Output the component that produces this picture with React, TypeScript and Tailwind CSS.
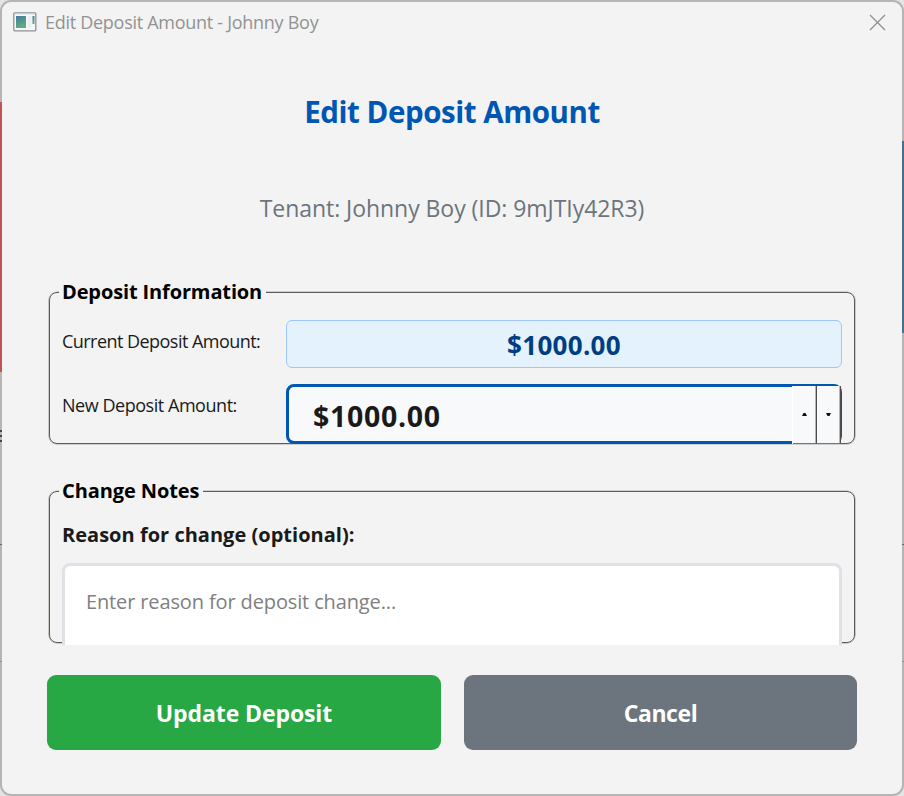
import type { ReactNode } from "react";

function Group({ title, tracking, className, children }: { title: string; tracking: string; className: string; children: ReactNode }) {
  return (
    <fieldset className={`w-[806px] rounded-[8px] border border-[#5c5c5c] shadow-[0_0_0_0.6px_#aaaaaa] ${className}`}>
      <legend className={`ml-[9px] h-[26px] whitespace-nowrap bg-[#f3f3f3] pr-1 pl-[3px] text-[20px] leading-[26px] font-bold text-black ${tracking}`}>
        {title}
      </legend>
      {children}
    </fieldset>
  );
}

function WindowIcon() {
  return (
    <svg width="24" height="20" viewBox="0 0 24 20" className="shrink-0">
      <defs>
        <linearGradient id="pane" x1="0" y1="0" x2="0.4" y2="1">
          <stop offset="0" stopColor="#4478a6" />
          <stop offset="1" stopColor="#5ab078" />
        </linearGradient>
      </defs>
      <rect x="0.8" y="0.8" width="22" height="18" rx="1" fill="#f7f8f8" stroke="#8b9198" strokeWidth="1.3" />
      <path d="M2 2.2h19.5" stroke="#dfe3e6" />
      <rect x="3" y="4" width="10" height="12" fill="url(#pane)" />
      <rect x="14.5" y="4" width="4" height="12" fill="#eceeef" />
      <rect x="19.5" y="4" width="2" height="8" fill="url(#pane)" />
    </svg>
  );
}

export default function App() {
  return (
    <div className="relative h-[796px] w-[904px] overflow-hidden bg-[#e4e4e4] font-['Open_Sans','Noto_Sans',sans-serif]">
      <div className="flex h-[796px] w-[904px] flex-col overflow-hidden rounded-[11px] border-2 border-[#b5b5b5] bg-[#f3f3f3]">
        <header className="flex h-[40px] shrink-0 items-center pr-[16px] pl-[11px]">
          <WindowIcon />
          <span className="ml-[8px] grow text-[18px] leading-[24px] tracking-[-0.28px] whitespace-nowrap text-[#929292]">
            Edit Deposit Amount - Johnny Boy
          </span>
          <svg width="17" height="17" viewBox="0 0 17 17" fill="none" stroke="#929292" strokeWidth="1.4">
            <path d="M1 1l15 15M16 1L1 16" />
          </svg>
        </header>

        <main className="flex grow flex-col px-[45px]">
          <h1 className="mt-[50px] h-[40px] text-center text-[29.5px] leading-[40px] font-bold tracking-[-0.45px] whitespace-nowrap text-[#0056b3]">
            Edit Deposit Amount
          </h1>
          <p className="mt-[59px] h-[34px] text-center text-[23px] leading-[34px] tracking-[-0.05px] whitespace-nowrap text-[#6c757d]">
            Tenant: Johnny Boy (ID: 9mJTIy42R3)
          </p>

          <Group title="Deposit Information" tracking="tracking-[-0.13px]" className="mt-[54px] ml-[2px] h-[165px]">
            <div className="ml-[12px] grid w-[780px] grid-cols-[224px_556px] text-[#1a1a1a]">
              <div className="mt-[22px] h-[28px] text-[18px] leading-[28px] tracking-[-0.54px] whitespace-nowrap">Current Deposit Amount:</div>
              <div className="mt-[15px] h-[48px] rounded-[6px] border border-[#9ec5fe] bg-[#e3f2fd] text-center text-[26px] leading-[48px] font-bold tracking-[0.3px] text-[#003d82]">
                $1000.00
              </div>
              <div className="mt-[23px] h-[28px] text-[18px] leading-[28px] tracking-[-0.46px] whitespace-nowrap">New Deposit Amount:</div>
              <div className="relative mt-[16px] flex h-[60px] rounded-[8px] border-[3px] border-[#0056b3] bg-[#f8f9fa]">
                <span className="ml-[24px] text-[28.5px] leading-[58px] font-bold tracking-[0.7px]">$1000.00</span>
                <div className="absolute top-[-1px] right-[-2px] flex h-[58px] border-l border-white">
                  {["M0 3h5L3.5 0h-2z", "M0 0h5L3.5 3h-2z"].map((d) => (
                    <div key={d} className="flex h-[58px] w-[24px] items-center justify-center border-r border-b border-r-[#4d4d4d] border-b-[#777] bg-[#f8f9fa] shadow-[inset_-1px_0_0_#b5b5b5]">
                      <svg width="5" height="3" viewBox="0 0 5 3"><path d={d} fill="#111" /></svg>
                    </div>
                  ))}
                </div>
              </div>
            </div>
          </Group>

          <Group title="Change Notes" tracking="tracking-[-0.1px]" className="mt-[34px] ml-[2px] h-[165px]">
            <div className="ml-[12px] flex w-[780px] flex-col">
              <label className="mt-[16px] h-[30px] text-[20px] leading-[30px] font-bold tracking-[0.02px] whitespace-nowrap text-[#1a1a1a]">
                Reason for change (optional):
              </label>
              <div className="mt-[13px] h-[82px] rounded-t-[8px] border-[3px] border-b-0 border-[#dee2e6] bg-white pl-[21px] text-[20px] leading-[72px] tracking-[-0.13px] whitespace-nowrap text-[#808080]">
                Enter reason for deposit change...
              </div>
            </div>
          </Group>

          <div className="mt-[32px] flex gap-[23px] text-[23px] font-bold text-white">
            <button className="h-[75px] w-[394px] rounded-[9px] bg-[#28a745] pt-[2px] tracking-[-0.1px]">Update Deposit</button>
            <button className="h-[75px] w-[393px] rounded-[9px] bg-[#6c757d] pt-[2px] tracking-[-0.4px]">Cancel</button>
          </div>
        </main>
      </div>

      <div className="absolute top-[102px] left-0 h-[270px] w-[2px] bg-[#bd5652]" />
      <div className="absolute top-[141px] right-0 h-[192px] w-[2px] bg-[#3f7396]" />
      <div className="absolute top-[430px] left-0 h-[2px] w-[2px] bg-[#444]" />
      <div className="absolute top-[435px] left-0 h-[2px] w-[2px] bg-[#444]" />
      <div className="absolute top-[440px] left-0 h-[2px] w-[2px] bg-[#444]" />
      <div className="absolute top-[544px] left-0 h-px w-[2px] bg-[#666]" />
      <div className="absolute top-[544px] right-0 h-px w-[2px] bg-[#666]" />
      <div className="absolute top-[661px] left-0 h-px w-[2px] bg-[#8c8c8c]" />
      <div className="absolute top-[661px] right-0 h-px w-[2px] bg-[#8c8c8c]" />
    </div>
  );
}
